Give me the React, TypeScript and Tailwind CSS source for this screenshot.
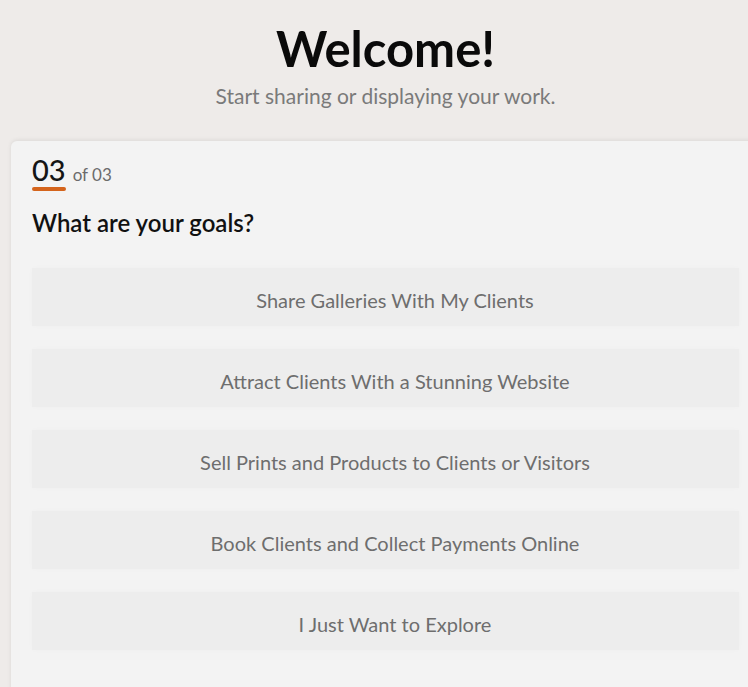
const goals = [
    'Share Galleries With My Clients',
    'Attract Clients With a Stunning Website',
    'Sell Prints and Products to Clients or Visitors',
    'Book Clients and Collect Payments Online',
    'I Just Want to Explore',
];

export default function App() {
    return (
        <div className="w-[748px] h-[687px] overflow-hidden bg-[#eeebe9] font-['Lato','Noto_Sans',sans-serif]">
            <div className="w-[771px] px-[11px]">
                {/* Header */}
                <div className="flex flex-col items-center pt-[20px]">
                    <h1 className="text-[49px] leading-[56px] font-bold text-[#0a0a0a]">Welcome!</h1>
                    <p className="mt-[6px] text-[21px] leading-[28px] text-[#7a7a7a]">
                        Start sharing or displaying your work.
                    </p>
                </div>

                {/* Card */}
                <div className="mt-[31px] min-h-[600px] bg-[#f3f3f3] rounded-tl-[6px] shadow-[0_-1px_4px_rgba(0,0,0,0.08)] px-[21px] pt-[12px]">
                    <div className="flex items-baseline gap-[7px]">
                        <div className="flex flex-col">
                            <span className="text-[29px] leading-[34px] font-medium text-[#151515]">03</span>
                            <span className="h-[4px] rounded-full bg-[#d4641c]"></span>
                        </div>
                        <span className="text-[17px] text-[#6b6b6b]">of 03</span>
                    </div>

                    <h2 className="mt-[17px] text-[24px] leading-[30px] font-semibold text-[#111]">
                        What are your goals?
                    </h2>

                    <div className="mt-[30px] flex flex-col gap-[23px]">
                        {goals.map((g) => (
                            <button
                                key={g}
                                className="h-[58px] w-full pl-[19px] pt-[5px] bg-[#ededed] shadow-[0_0_6px_rgba(0,0,0,0.02)] text-[20px] text-[#6e6e6e]"
                            >
                                {g}
                            </button>
                        ))}
                    </div>
                </div>
            </div>
        </div>
    );
}
